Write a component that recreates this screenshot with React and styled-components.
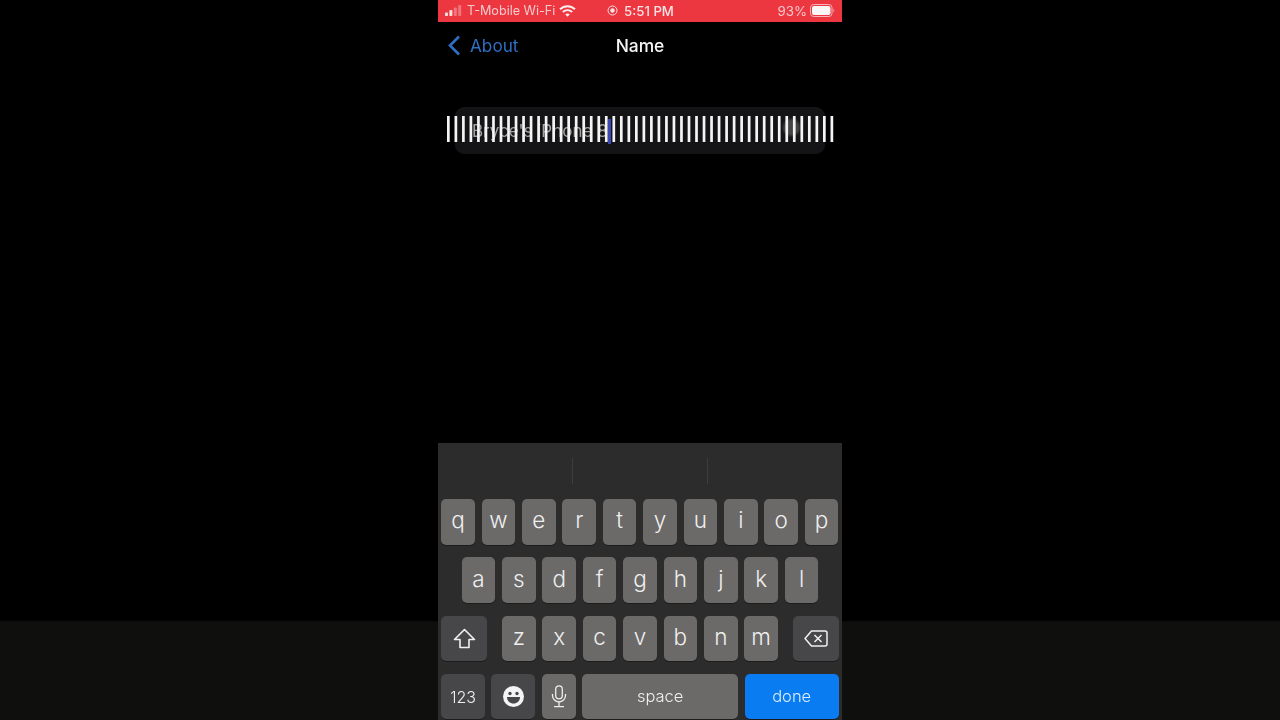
import React from 'react';
import styled, { createGlobalStyle } from 'styled-components';

const Global = createGlobalStyle`
  html, body { margin: 0; padding: 0; background: #000; }
  body { font-family: "Inter", "Liberation Sans", sans-serif; }
  #root { height: 720px; overflow: hidden; }
`;

const Stage = styled.div`
  width: 1280px;
  height: 720px;
  background: linear-gradient(#000 0, #000 620px, #0f0f0e 622px, #0f0f0e 100%);
  display: flex;
  justify-content: center;
`;

const Phone = styled.div`
  width: 404px;
  height: 720px;
  background: #000;
  display: flex;
  flex-direction: column;
`;

const StatusBar = styled.div`
  height: 21.5px;
  background: #ec3640;
  color: #f6c9cc;
  display: flex;
  align-items: center;
  padding: 0 7px;
  font-size: 12.6px;
  box-sizing: border-box;
  flex-shrink: 0;
  filter: blur(0.3px);
`;

const StatusLeft = styled.div`
  flex: 1;
  display: flex;
  align-items: center;
  gap: 4px;
`;

const StatusCenter = styled.div`
  display: flex;
  align-items: center;
  gap: 6px;
  color: #fbe3e4;
  font-weight: 500;
  font-size: 13.2px;
  margin-left: 1px;
`;

const StatusRight = styled.div`
  flex: 1;
  display: flex;
  align-items: center;
  justify-content: flex-end;
  gap: 3px;
  font-size: 13.3px;
`;

const NavBar = styled.div`
  position: relative;
  height: 47px;
  display: flex;
  align-items: center;
  justify-content: center;
  flex-shrink: 0;
  filter: blur(0.3px);
`;

const Back = styled.div`
  position: absolute;
  left: 9px;
  top: 0;
  height: 47px;
  display: flex;
  align-items: center;
  gap: 9px;
  color: #2f6fc4;
  font-size: 17.2px;
`;

const Title = styled.div`
  color: #f5f5f5;
  font-size: 17.4px;
  font-weight: 500;
`;

const FieldArea = styled.div`
  flex: 1;
  position: relative;
  padding: 38px 17px 0;
`;

const Field = styled.div`
  height: 47px;
  background: #141416;
  border-radius: 9px;
  display: flex;
  align-items: center;
  padding: 2px 0 0 17px;
  color: #a2a2a2;
  font-size: 17px;
  box-sizing: border-box;
  filter: blur(0.4px);
`;

const Caret = styled.span`
  width: 3px;
  height: 25px;
  background: #3b46b8;
  margin-left: 0;
`;

const ClearDot = styled.div`
  position: absolute;
  left: 345px;
  top: 50px;
  width: 17px;
  height: 17px;
  border-radius: 50%;
  background: #454546;
  filter: blur(0.8px);
`;

const Bars = styled.svg`
  position: absolute;
  left: 9px;
  top: 47px;
  filter: blur(0.25px);
`;

const Keyboard = styled.div`
  height: 277px;
  background: #2d2c2d;
  flex-shrink: 0;
  display: flex;
  flex-direction: column;
  box-sizing: border-box;
  padding: 0 3.3px;
  filter: blur(0.3px);
`;

const Suggestions = styled.div`
  height: 56px;
  display: flex;
  justify-content: center;
  gap: 134px;
  padding-top: 15px;
  box-sizing: border-box;
  flex-shrink: 0;
`;

const Divider = styled.div`
  width: 1px;
  height: 26px;
  background: #3e3d3c;
`;

const Rows = styled.div`
  display: flex;
  flex-direction: column;
  gap: 12.8px;
`;

const Row = styled.div`
  display: flex;
  height: 45.5px;
  gap: ${p => p.$gap ?? 6.9}px;
  justify-content: ${p => p.$justify || 'flex-start'};
`;

const LetterGroup = styled.div`
  display: flex;
  gap: 6.9px;
`;

const Key = styled.div`
  width: ${p => p.$w || 33.5}px;
  flex-shrink: 0;
  height: 45.5px;
  border-radius: 5px;
  background: ${p => p.$bg || '#6b6a69'};
  color: ${p => p.$color || '#efefef'};
  font-size: ${p => p.$size || 22.5}px;
  font-weight: 300;
  display: flex;
  align-items: center;
  justify-content: center;
  padding-bottom: ${p => p.$pb ?? 4}px;
  box-sizing: border-box;
  box-shadow: 0 1px 0 #1c1c1c;
`;

const dark = '#474648';

const row1 = 'qwertyuiop'.split('');
const row2 = 'asdfghjkl'.split('');
const row3 = 'zxcvbnm'.split('');
const barX = Array.from({ length: 52 }, (_, i) => i * 7.52);

export default function App() {
  return (
    <Stage>
      <Global />
      <Phone>
        <StatusBar>
          <StatusLeft>
            <svg width="18" height="11" viewBox="0 0 18 11">
              <rect x="0" y="7.5" width="3" height="3.5" rx="0.8" fill="#f8dfe0" />
              <rect x="4.4" y="5" width="3" height="6" rx="0.8" fill="#f8dfe0" />
              <rect x="8.8" y="2.5" width="3" height="8.5" rx="0.8" fill="#f0767d" />
              <rect x="13.2" y="0" width="3" height="11" rx="0.8" fill="#f0767d" />
            </svg>
            <span>T-Mobile Wi-Fi</span>
            <svg width="17" height="12" viewBox="0 0 17 12">
              <path d="M1 4.3 C5.2 0.2 11.8 0.2 16 4.3" fill="none" stroke="#fbeeee" strokeWidth="1.9" />
              <path d="M3.8 7 C6.5 4.5 10.5 4.5 13.2 7" fill="none" stroke="#fbeeee" strokeWidth="1.9" />
              <path d="M6.2 9.3 L8.5 11.8 L10.8 9.3 C9.5 8.1 7.5 8.1 6.2 9.3 Z" fill="#fbeeee" />
            </svg>
          </StatusLeft>
          <StatusCenter>
            <svg width="11" height="11" viewBox="0 0 11 11">
              <circle cx="5.5" cy="5.5" r="4.5" fill="none" stroke="#fbe3e4" strokeWidth="1" />
              <circle cx="5.5" cy="5.5" r="2.2" fill="#fbe3e4" />
            </svg>
            <span>5:51 PM</span>
          </StatusCenter>
          <StatusRight>
            <span>93%</span>
            <svg width="25" height="13" viewBox="0 0 25 13">
              <rect x="0.5" y="0.5" width="21.5" height="12" rx="3.2" fill="none" stroke="#f6b4b8" strokeWidth="1" />
              <rect x="2" y="2" width="18.5" height="9" rx="2" fill="#fdf6f6" />
              <path d="M23.5 4.5 C24.5 5 24.5 8 23.5 8.5 Z" fill="#f6b4b8" />
            </svg>
          </StatusRight>
        </StatusBar>
        <NavBar>
          <Back>
            <svg width="14" height="21" viewBox="0 0 14 21">
              <path d="M12 1.5 L3 10.5 L12 19.5" fill="none" stroke="#2f6fc4" strokeWidth="2.6" />
            </svg>
            <span>About</span>
          </Back>
          <Title>Name</Title>
        </NavBar>
        <FieldArea>
          <Field>
            <span>Bryce's iPhone 8</span>
            <Caret />
          </Field>
          <ClearDot />
          <Bars width="387" height="26" viewBox="0 0 387 26">
            {barX.map(x => <rect key={x} x={x} y="0" width="2.7" height="26" fill="#f4f4f4" />)}
          </Bars>
        </FieldArea>
        <Keyboard>
          <Suggestions>
            <Divider />
            <Divider />
          </Suggestions>
          <Rows>
            <Row>
              {row1.map(k => <Key key={k}>{k}</Key>)}
            </Row>
            <Row $justify="center">
              {row2.map(k => <Key key={k}>{k}</Key>)}
            </Row>
            <Row $justify="space-between">
              <Key $w={45.5} $bg={dark} $pb={0}>
                <svg width="23" height="21" viewBox="0 0 23 21">
                  <path d="M11.5 1.5 L21.5 11.5 H16 V19.5 H7 V11.5 H1.5 Z" fill="none" stroke="#f0f0f0" strokeWidth="1.6" strokeLinejoin="round" />
                </svg>
              </Key>
              <LetterGroup>
                {row3.map(k => <Key key={k}>{k}</Key>)}
              </LetterGroup>
              <Key $w={45.5} $bg={dark} $pb={0}>
                <svg width="24" height="17" viewBox="0 0 24 17">
                  <path d="M7.5 1 H21 a2 2 0 0 1 2 2 V14 a2 2 0 0 1 -2 2 H7.5 L1 8.5 Z" fill="none" stroke="#f0f0f0" strokeWidth="1.5" strokeLinejoin="round" />
                  <path d="M10.5 5 L17.5 12 M17.5 5 L10.5 12" stroke="#f0f0f0" strokeWidth="1.5" />
                </svg>
              </Key>
            </Row>
            <Row $gap={6.5}>
              <Key $w={43.7} $bg={dark} $size={16} $pb={0}>123</Key>
              <Key $w={44} $bg={dark} $pb={0}>
                <svg width="21" height="21" viewBox="0 0 21 21">
                  <circle cx="10.5" cy="10.5" r="10.5" fill="#f4f4f4" />
                  <circle cx="7" cy="7.5" r="1.7" fill="#474648" />
                  <circle cx="14" cy="7.5" r="1.7" fill="#474648" />
                  <path d="M4 11 H17 C17 15 14 17.5 10.5 17.5 C7 17.5 4 15 4 11 Z" fill="#474648" />
                </svg>
              </Key>
              <Key $w={33.7} $pb={0}>
                <svg width="16" height="23" viewBox="0 0 16 23">
                  <rect x="4.7" y="0.8" width="6.6" height="13" rx="3.3" fill="none" stroke="#eee" strokeWidth="1.3" />
                  <path d="M1.5 9 V10.5 C1.5 14 4.5 17 8 17 C11.5 17 14.5 14 14.5 10.5 V9 M8 17 V21.7 M3 21.7 H13" fill="none" stroke="#eee" strokeWidth="1.3" />
                </svg>
              </Key>
              <Key $w={156} $size={16.5} $pb={2}>space</Key>
              <Key $w={94} $bg="#0a7cf2" $color="#ddeeff" $size={16.5} $pb={2}>done</Key>
            </Row>
          </Rows>
        </Keyboard>
      </Phone>
    </Stage>
  );
}
